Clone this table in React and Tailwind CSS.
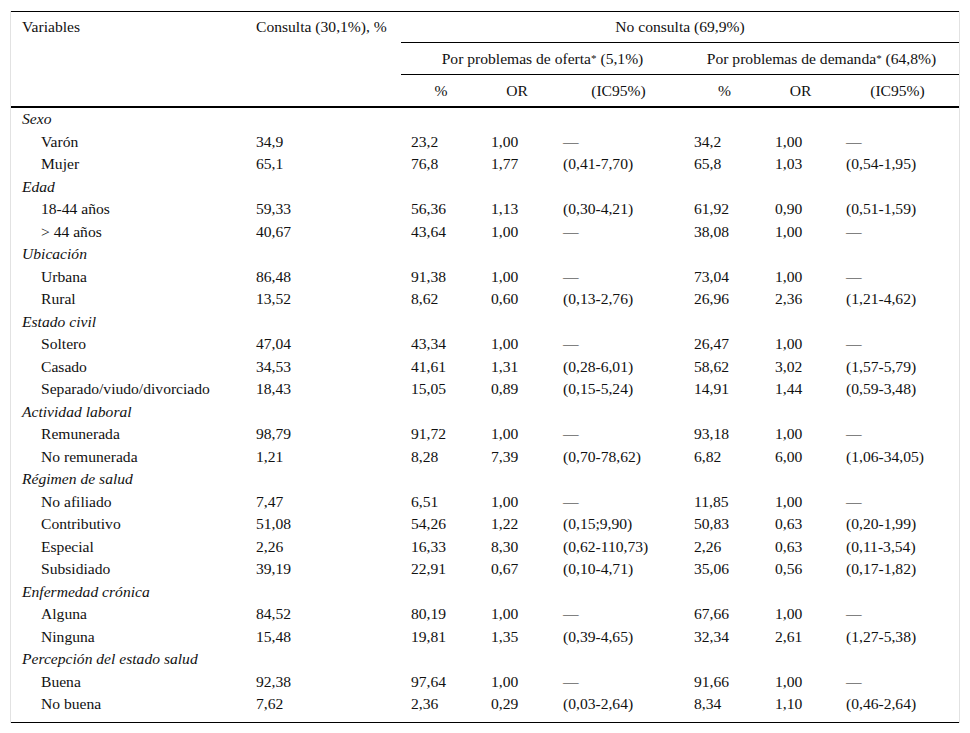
import React from "react";

const cols = "grid grid-cols-[235px_155px_80px_72px_131px_81px_71px_123px]";

const D = "—";
const groups = [
  ["Sexo", [
    ["Varón", "34,9", "23,2", "1,00", D, "34,2", "1,00", D],
    ["Mujer", "65,1", "76,8", "1,77", "(0,41-7,70)", "65,8", "1,03", "(0,54-1,95)"],
  ]],
  ["Edad", [
    ["18-44 años", "59,33", "56,36", "1,13", "(0,30-4,21)", "61,92", "0,90", "(0,51-1,59)"],
    ["> 44 años", "40,67", "43,64", "1,00", D, "38,08", "1,00", D],
  ]],
  ["Ubicación", [
    ["Urbana", "86,48", "91,38", "1,00", D, "73,04", "1,00", D],
    ["Rural", "13,52", "8,62", "0,60", "(0,13-2,76)", "26,96", "2,36", "(1,21-4,62)"],
  ]],
  ["Estado civil", [
    ["Soltero", "47,04", "43,34", "1,00", D, "26,47", "1,00", D],
    ["Casado", "34,53", "41,61", "1,31", "(0,28-6,01)", "58,62", "3,02", "(1,57-5,79)"],
    ["Separado/viudo/divorciado", "18,43", "15,05", "0,89", "(0,15-5,24)", "14,91", "1,44", "(0,59-3,48)"],
  ]],
  ["Actividad laboral", [
    ["Remunerada", "98,79", "91,72", "1,00", D, "93,18", "1,00", D],
    ["No remunerada", "1,21", "8,28", "7,39", "(0,70-78,62)", "6,82", "6,00", "(1,06-34,05)"],
  ]],
  ["Régimen de salud", [
    ["No afiliado", "7,47", "6,51", "1,00", D, "11,85", "1,00", D],
    ["Contributivo", "51,08", "54,26", "1,22", "(0,15;9,90)", "50,83", "0,63", "(0,20-1,99)"],
    ["Especial", "2,26", "16,33", "8,30", "(0,62-110,73)", "2,26", "0,63", "(0,11-3,54)"],
    ["Subsidiado", "39,19", "22,91", "0,67", "(0,10-4,71)", "35,06", "0,56", "(0,17-1,82)"],
  ]],
  ["Enfermedad crónica", [
    ["Alguna", "84,52", "80,19", "1,00", D, "67,66", "1,00", D],
    ["Ninguna", "15,48", "19,81", "1,35", "(0,39-4,65)", "32,34", "2,61", "(1,27-5,38)"],
  ]],
  ["Percepción del estado salud", [
    ["Buena", "92,38", "97,64", "1,00", D, "91,66", "1,00", D],
    ["No buena", "7,62", "2,36", "0,29", "(0,03-2,64)", "8,34", "1,10", "(0,46-2,64)"],
  ]],
];

function Row({ r }) {
  return (
    <div className={`${cols} h-[22.5px] items-center`}>
      <div className="pl-[30px]">{r[0]}</div>
      {r.slice(1).map((v, i) => (
        <div key={i} className="pl-[10px]">{v}</div>
      ))}
    </div>
  );
}

export default function App() {
  return (
    <div className="bg-white w-[970px] h-[733px] pt-[11px] text-[#111] leading-[22px] text-[15.6px] [font-family:'Liberation_Serif','Times_New_Roman',serif]">
      <div className="ml-[10px] w-[950px] border-l border-r border-[#e2e2e2]">
        <div className="border-t border-b border-black">
          <div className={`${cols} grid-rows-[31px_32px_31px] border-b border-black`}>
            <div className="row-span-3 pl-[11px] pt-[4px]">Variables</div>
            <div className="row-span-3 pl-[10px] pt-[4px]">Consulta (30,1%), %</div>
            <div className="col-span-6 flex items-center justify-center border-b border-black">No consulta (69,9%)</div>
            <div className="col-span-3 flex items-center justify-center border-b border-black">
              <span>Por problemas de oferta<sup className="text-[11px] relative -top-[2px]">*</sup> (5,1%)</span>
            </div>
            <div className="col-span-3 flex items-center justify-center border-b border-black">
              <span>Por problemas de demanda<sup className="text-[11px] relative -top-[2px]">*</sup> (64,8%)</span>
            </div>
            <div className="flex items-center justify-center">%</div>
            <div className="flex items-center justify-center">OR</div>
            <div className="flex items-center justify-center">(IC95%)</div>
            <div className="flex items-center justify-center">%</div>
            <div className="flex items-center justify-center">OR</div>
            <div className="flex items-center justify-center">(IC95%)</div>
          </div>
          <div className="border-t border-black pb-[6px]">
            {groups.map(([g, rows]) => (
              <React.Fragment key={g}>
                <div className="h-[22.5px] flex items-center pl-[11px] italic">{g}</div>
                {rows.map((r) => (
                  <Row key={r[0]} r={r} />
                ))}
              </React.Fragment>
            ))}
          </div>
        </div>
      </div>
    </div>
  );
}
